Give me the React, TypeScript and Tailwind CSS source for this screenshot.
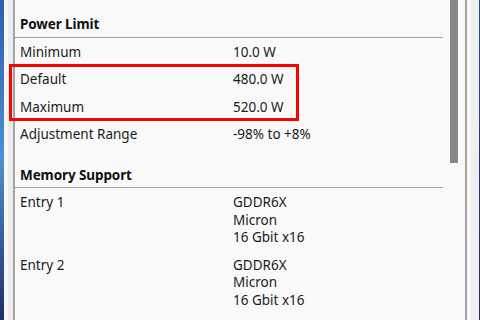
import React from 'react';

interface Row {
  label: string;
  values: string[];
}

const powerRows: Row[] = [
  { label: 'Minimum', values: ['10.0 W'] },
  { label: 'Default', values: ['480.0 W'] },
  { label: 'Maximum', values: ['520.0 W'] },
  { label: 'Adjustment Range', values: ['-98% to +8%'] },
];

const memoryRows: Row[] = [
  { label: 'Entry 1', values: ['GDDR6X', 'Micron', '16 Gbit x16'] },
  { label: 'Entry 2', values: ['GDDR6X', 'Micron', '16 Gbit x16'] },
];

function SectionHeader({ title }: { title: string }) {
  return (
    <div className="border-b border-[#a0a0a0] pb-[3px] pl-[5px]">
      <div className="text-[13.5px] font-bold leading-[17.5px] tracking-[-0.1px] text-[#111]">{title}</div>
    </div>
  );
}

function InfoRow({ row }: { row: Row }) {
  return (
    <div className="flex pb-[4px] pl-[5px] pt-[6px] leading-[17.5px]">
      <div className="w-[213px] shrink-0">{row.label}</div>
      <div className="flex flex-col">
        {row.values.map((v, i) => (
          <div key={i}>{v}</div>
        ))}
      </div>
    </div>
  );
}

export default function App() {
  return (
    <div
      className="relative flex h-[320px] w-[480px] overflow-hidden bg-[#f9f9f9] text-[13.5px] text-[#1b1b1b]"
      style={{ fontFamily: '"Noto Sans", "Open Sans", sans-serif' }}
    >
      {/* desktop edge + window frame, left */}
      <div className="w-[4px] shrink-0 bg-gradient-to-b from-[#2b5fb0] via-[#4f8fcf] to-[#1f2f6a]" />
      <div className="flex w-[9px] shrink-0 bg-[#f0f0f0]">
        <div className="w-[4px] bg-[#f7f7f7]" />
        <div className="w-[5px] bg-[#ececec]" />
      </div>
      <div className="w-[2px] shrink-0 bg-[#a3a3a3]" />

      {/* content */}
      <div className="w-[434px] shrink-0 pr-[6px] pt-[16px]">
        <SectionHeader title="Power Limit" />
        {powerRows.map(r => (
          <InfoRow key={r.label} row={r} />
        ))}
        <div className="mt-[19px]">
          <SectionHeader title="Memory Support" />
          {memoryRows.map(r => (
            <InfoRow key={r.label} row={r} />
          ))}
        </div>
      </div>

      {/* scrollbar */}
      <div className="flex w-[16px] shrink-0 flex-col">
        <div className="h-[164px] w-[10px] border-b border-l border-r border-[#fdfdfd] bg-[#888888]" />
      </div>
      <div className="w-[2px] shrink-0 bg-[#a3a3a3]" />
      <div className="flex w-[12px] shrink-0">
        <div className="w-[4px] bg-[#fbfbfb]" />
        <div className="w-[8px] bg-[#efefef]" />
      </div>
      <div className="w-[2px] shrink-0 bg-gradient-to-b from-[#2a48a8] to-[#1c2a70]" />

      {/* highlight annotation */}
      <div className="absolute left-[9px] top-[64px] h-[57px] w-[290px] border-[3px] border-[#ff0000]" />
    </div>
  );
}
